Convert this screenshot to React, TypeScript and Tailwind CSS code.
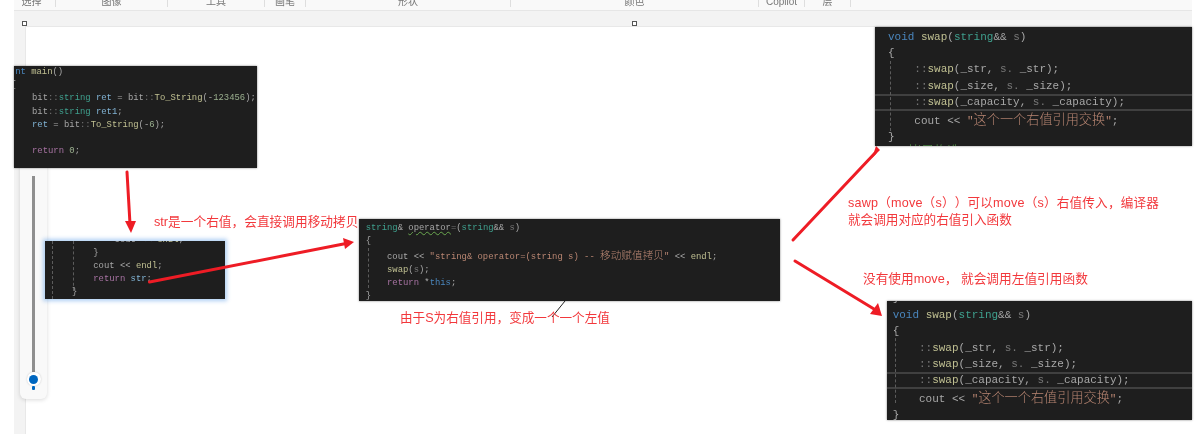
import React from "react";

const c = {
  k: "text-[#4a86bd]",
  t: "text-[#3fa08e]",
  f: "text-[#c0c092]",
  p: "text-[#a873a3]",
  v: "text-[#82b5d6]",
  n: "text-[#9bb08f]",
  s: "text-[#b98672]",
  g: "text-[#767676]",
  cm: "text-[#57a64a]",
};

const S = ({ k, children }: { k: keyof typeof c; children: React.ReactNode }) => <span className={c[k]}>{children}</span>;

const Cn = ({ big, k = "s", children }: { big?: boolean; k?: keyof typeof c; children: React.ReactNode }) => (
  <span className={`${c[k]} font-light ${big ? "text-[13.16px]" : "text-[10.67px]"}`} style={{ fontFamily: '"Noto Sans CJK SC", sans-serif' }}>
    {children}
  </span>
);

const Guide = ({ className }: { className: string }) => <div className={`absolute border-l border-dashed border-[#5c5c5c] ${className}`} />;

const SwapBody = () => (
  <>
    <div><S k="k">void</S> <S k="f">swap</S>(<S k="t">string</S>&amp;&amp; <S k="g">s</S>)</div>
    <div>{"{"}</div>
    <div>{"    "}<S k="g">::</S><S k="f">swap</S>(_str, <S k="g">s.</S> _str);</div>
    <div>{"    "}<S k="g">::</S><S k="f">swap</S>(_size, <S k="g">s.</S> _size);</div>
    <div className="-mx-[20px] px-[20px] shadow-[inset_0_2px_0_#404040,inset_0_-2px_0_#404040]">{"    "}<S k="g">::</S><S k="f">swap</S>(_capacity, <S k="g">s.</S> _capacity);</div>
    <div>{"    "}cout &lt;&lt; <S k="s">"</S><Cn big>这个一个右值引用交换</Cn><S k="s">"</S>;</div>
    <div>{"}"}</div>
  </>
);

const arrows = (
  <svg className="absolute left-0 top-0" width="1199" height="434" viewBox="0 0 1199 434" fill="none">
    <g stroke="#ee1c25" strokeWidth="3" strokeLinecap="round">
      <path d="M127 172 L130 224" />
      <path d="M793 240 L875 153" />
      <path d="M795 261 L874 309" />
    </g>
    <g fill="#ee1c25">
      <path d="M125 221 L136 221 L131 233 Z" />
      <path d="M870 314 L878 303 L882 316 Z" />
      <path d="M872 158 L880 150 L876 146 Z" />
    </g>
  </svg>
);

const overArrow = (
  <svg className="absolute left-0 top-0" width="1199" height="434" viewBox="0 0 1199 434" fill="none">
    <path d="M149.5 282 L346 243.5" stroke="#ee1c25" strokeWidth="3" strokeLinecap="round" />
    <path d="M343 238 L345 249 L354 242 Z" fill="#ee1c25" />
    <path d="M565 301 L552 317" stroke="#222" strokeWidth="1" />
  </svg>
);

const smallCode = "text-[8.89px] leading-[13.1px]";
const bigCode = "text-[10.97px] leading-[16.4px]";
const codeBase = "absolute overflow-hidden bg-[#1e1e1e] text-[#a8a8a8] whitespace-pre shadow-[0_0_2px_rgba(0,0,0,0.5)]";
const mono = { fontFamily: '"Liberation Mono", monospace' };
const note = "absolute whitespace-nowrap text-[#f2383c] [text-spacing-trim:space-all]";

const labels: [string, string][] = [
  ["选择", "w-[42px] pr-[6px]"],
  ["图像", "w-[112px]"],
  ["工具", "w-[97px]"],
  ["画笔", "w-[41px]"],
  ["形状", "w-[205px]"],
  ["颜色", "w-[248px]"],
  ["Copilot", "w-[46px]"],
  ["层", "w-[46px]"],
];

export default function App() {
  return (
    <div className="relative h-[434px] w-[1199px] overflow-hidden bg-white blur-[0.45px]" style={{ fontFamily: '"Liberation Sans", "Noto Sans CJK SC", sans-serif' }}>
      <div className="ml-[14px] flex h-full w-[1178px] flex-col bg-[#f3f3f3]">
        <div className="flex h-[11px] shrink-0 overflow-hidden border-b border-[#e6e6e6] bg-[#f9f9f9]">
          {labels.map(([text, w]) => (
            <div key={text} className={`${w} h-[7px] shrink-0 border-r border-[#dedede] text-center text-[10px] leading-[4px] text-[#777]`}>
              {text}
            </div>
          ))}
        </div>
        <div className="flex flex-1 pl-[11px] pt-[15px]">
          <div className="flex-1 border-l border-t border-[#e8e8e8] bg-white" />
        </div>
      </div>

      <div className="absolute left-[22px] top-[21px] h-[5px] w-[5px] border border-[#555] bg-white" />
      <div className="absolute left-[632px] top-[21px] h-[5px] w-[5px] border border-[#555] bg-white" />

      {/* zoom slider */}
      <div className="absolute left-[20px] top-[160px] flex h-[239px] w-[27px] flex-col items-center rounded-b-[6px] bg-[#f9f9f9] pt-[16px] shadow-[0_1px_4px_rgba(0,0,0,0.15)]">
        <div className="h-[196px] w-[3px] bg-[#8f8f8f]" />
        <div className="flex h-[14px] w-[14px] shrink-0 items-center justify-center rounded-full bg-white shadow-[0_0_2px_rgba(0,0,0,0.2)]">
          <div className="h-[9px] w-[9px] rounded-full bg-[#0067c0]" />
        </div>
        <div className="h-[4px] w-[3px] rounded-[1px] bg-[#0067c0]" />
      </div>

      {arrows}

      {/* window 1 */}
      <div className={`${codeBase} ${smallCode} left-[14px] top-[66px] h-[102px] w-[243px]`} style={mono}>
        <div className="-ml-[3.3px]">
          <div className="pl-[4.5px]"><S k="k">nt</S> <S k="f">main</S>()</div>
          <div>{"{"}</div>
          <div className="mt-[0.3px]">{"    "}bit<S k="g">::</S><S k="t">string</S> <S k="v">ret</S> = bit<S k="g">::</S><S k="f">To_String</S>(-<S k="n">123456</S>);</div>
          <div>{"    "}bit<S k="g">::</S><S k="t">string</S> <S k="v">ret1</S>;</div>
          <div>{"    "}<S k="v">ret</S> = bit<S k="g">::</S><S k="f">To_String</S>(-<S k="n">6</S>);</div>
          <div>{" "}</div>
          <div>{"    "}<S k="p">return</S> <S k="n">0</S>;</div>
        </div>
      </div>

      {/* window 2 */}
      <div className={`${codeBase} ${smallCode} left-[45px] top-[241px] h-[58px] w-[180px] shadow-[0_0_4px_2px_rgba(80,150,230,0.45)]`} style={mono}>
        <Guide className="left-[7px] top-0 h-full" />
        <Guide className="left-[28px] top-0 h-[50px]" />
        <div className="-mt-[7.5px] ml-[5.7px]">
          <div>{"            "}cout &lt;&lt; <S k="f">endl</S>;</div>
          <div>{"        }"}</div>
          <div>{"        "}cout &lt;&lt; <S k="f">endl</S>;</div>
          <div>{"        "}<S k="p">return</S> <S k="v">str</S>;</div>
          <div>{"    }"}</div>
        </div>
      </div>

      {/* window 3 */}
      <div className={`${codeBase} ${smallCode} left-[359px] top-[219px] h-[82px] w-[421px] pl-[6.7px] pt-[2.8px]`} style={mono}>
        <Guide className="left-[9px] top-[29px] h-[40px]" />
        <div><S k="t">string</S>&amp; <span className="underline decoration-[#6aa84f] decoration-wavy">operator</span><S k="g">=</S>(<S k="t">string</S>&amp;&amp; <S k="g">s</S>)</div>
        <div>{"{"}</div>
        <div>{"    "}cout &lt;&lt; <S k="s">"string&amp; operator=(string s) -- </S><Cn>移动赋值拷贝</Cn><S k="s">"</S> &lt;&lt; <S k="f">endl</S>;</div>
        <div>{"    "}<S k="f">swap</S>(<S k="g">s</S>);</div>
        <div>{"    "}<S k="p">return</S> *<S k="k">this</S>;</div>
        <div>{"}"}</div>
      </div>

      {/* window 4 */}
      <div className={`${codeBase} ${bigCode} left-[875px] top-[27px] h-[119px] w-[317px] pl-[13px] pt-[1.5px]`} style={mono}>
        <Guide className="left-[15px] top-[34px] h-[70px]" />
        <SwapBody />
        <div className="-mt-[2px]"><S k="cm">{"// "}</S><Cn big k="cm">拷贝构造</Cn></div>
      </div>

      {/* window 5 */}
      <div className={`${codeBase} ${bigCode} left-[887px] top-[301px] h-[119px] w-[305px] pl-[5.7px]`} style={mono}>
        <Guide className="left-[8px] top-[32px] h-[70px]" />
        <div className="-mt-[10.6px]">{"}"}</div>
        <SwapBody />
      </div>

      {overArrow}

      <div className={`${note} left-[154px] top-[213px] text-[12.7px] leading-[18px]`}>str是一个右值，会直接调用移动拷贝</div>
      <div className={`${note} left-[400px] top-[309px] text-[12.6px] leading-[18px]`}>由于S为右值引用，变成一个一个左值</div>
      <div className={`${note} left-[848px] top-[195px] text-[12.6px] leading-[16.6px]`}>
        <div className="tracking-[0.2px]">sawp（move（s））可以move（s）右值传入，编译器</div>
        <div>就会调用对应的右值引入函数</div>
      </div>
      <div className={`${note} left-[863px] top-[270px] text-[12.7px] leading-[18px]`}>没有使用move， 就会调用左值引用函数</div>
    </div>
  );
}
